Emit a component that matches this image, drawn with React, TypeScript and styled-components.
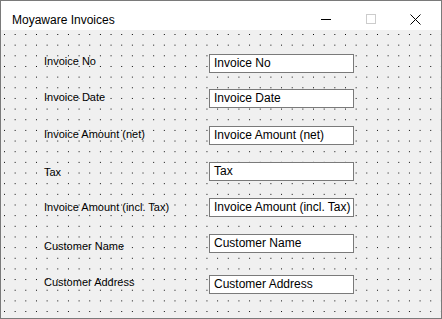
import styled, { createGlobalStyle } from "styled-components";

const GlobalStyle = createGlobalStyle`
  html, body {
    margin: 0;
    padding: 0;
    background: #ffffff;
  }
`;

const Window = styled.div`
  width: 442px;
  height: 319px;
  box-sizing: border-box;
  border: 1px solid #7a7a7a;
  display: flex;
  flex-direction: column;
  background: #f0f0f0;
  font-family: "Liberation Sans", Arial, sans-serif;
`;

const TitleBar = styled.header`
  height: 29px;
  flex: none;
  background: #ffffff;
  display: flex;
  align-items: flex-start;
  padding-left: 11px;
  padding-right: 3px;
`;

const Title = styled.div`
  flex: 1;
  font-size: 12px;
  line-height: 14px;
  color: #000;
  padding-top: 12px;
`;

const CaptionButton = styled.div`
  width: 45px;
  height: 29px;
  display: flex;
  align-items: flex-start;
  justify-content: center;
  padding-top: 13px;
  box-sizing: border-box;
`;

const Body = styled.main`
  flex: 1;
  padding-top: 24px;
  background-color: #f0f0f0;
  background-image: radial-gradient(circle at 0.5px 0.5px, #000 0.6px, transparent 0.75px);
  background-size: 10.667px 10.667px;
  background-position: 3px 4px;
  display: flex;
  flex-direction: column;
`;

const Row = styled.div<{ $gap: number }>`
  display: grid;
  grid-template-columns: 165px 145px;
  align-items: start;
  padding-left: 43px;
  margin-top: ${p => p.$gap}px;
`;

const Label = styled.span<{ $shift: number }>`
  font-size: 11px;
  line-height: 13px;
  color: #000;
  margin-top: ${p => p.$shift}px;
  justify-self: start;
`;

const TextBox = styled.div`
  height: 19px;
  box-sizing: border-box;
  border: 1px solid #7a7a7a;
  background: #ffffff;
  font-size: 12px;
  line-height: 17px;
  padding-left: 4px;
  color: #000;
  white-space: nowrap;
  overflow: hidden;
`;

const rows = [
  { label: "Invoice No", gap: 0, shift: 1 },
  { label: "Invoice Date", gap: 16, shift: 2 },
  { label: "Invoice Amount (net)", gap: 18, shift: 2 },
  { label: "Tax", gap: 17, shift: 4 },
  { label: "Invoice Amount (incl. Tax)", gap: 17, shift: 3 },
  { label: "Customer Name", gap: 17, shift: 6 },
  { label: "Customer Address", gap: 22, shift: 1 },
];

function App() {
  return (
    <>
      <GlobalStyle />
      <Window>
        <TitleBar>
          <Title>Moyaware Invoices</Title>
          <CaptionButton>
            <svg width="10" height="10" viewBox="0 0 10 10">
              <line x1="0" y1="5.5" x2="10" y2="5.5" stroke="#000" strokeWidth="1" />
            </svg>
          </CaptionButton>
          <CaptionButton>
            <svg width="10" height="10" viewBox="0 0 10 10">
              <rect x="0.5" y="0.5" width="9" height="9" fill="none" stroke="#cccccc" strokeWidth="1" />
            </svg>
          </CaptionButton>
          <CaptionButton>
            <svg width="11" height="11" viewBox="0 0 11 11">
              <path d="M0.5 0.5 L10.5 10.5 M10.5 0.5 L0.5 10.5" stroke="#000" strokeWidth="1" fill="none" />
            </svg>
          </CaptionButton>
        </TitleBar>
        <Body>
          {rows.map(r => (
            <Row key={r.label} $gap={r.gap}>
              <Label $shift={r.shift}>{r.label}</Label>
              <TextBox>{r.label}</TextBox>
            </Row>
          ))}
        </Body>
      </Window>
    </>
  );
}

export default App;
